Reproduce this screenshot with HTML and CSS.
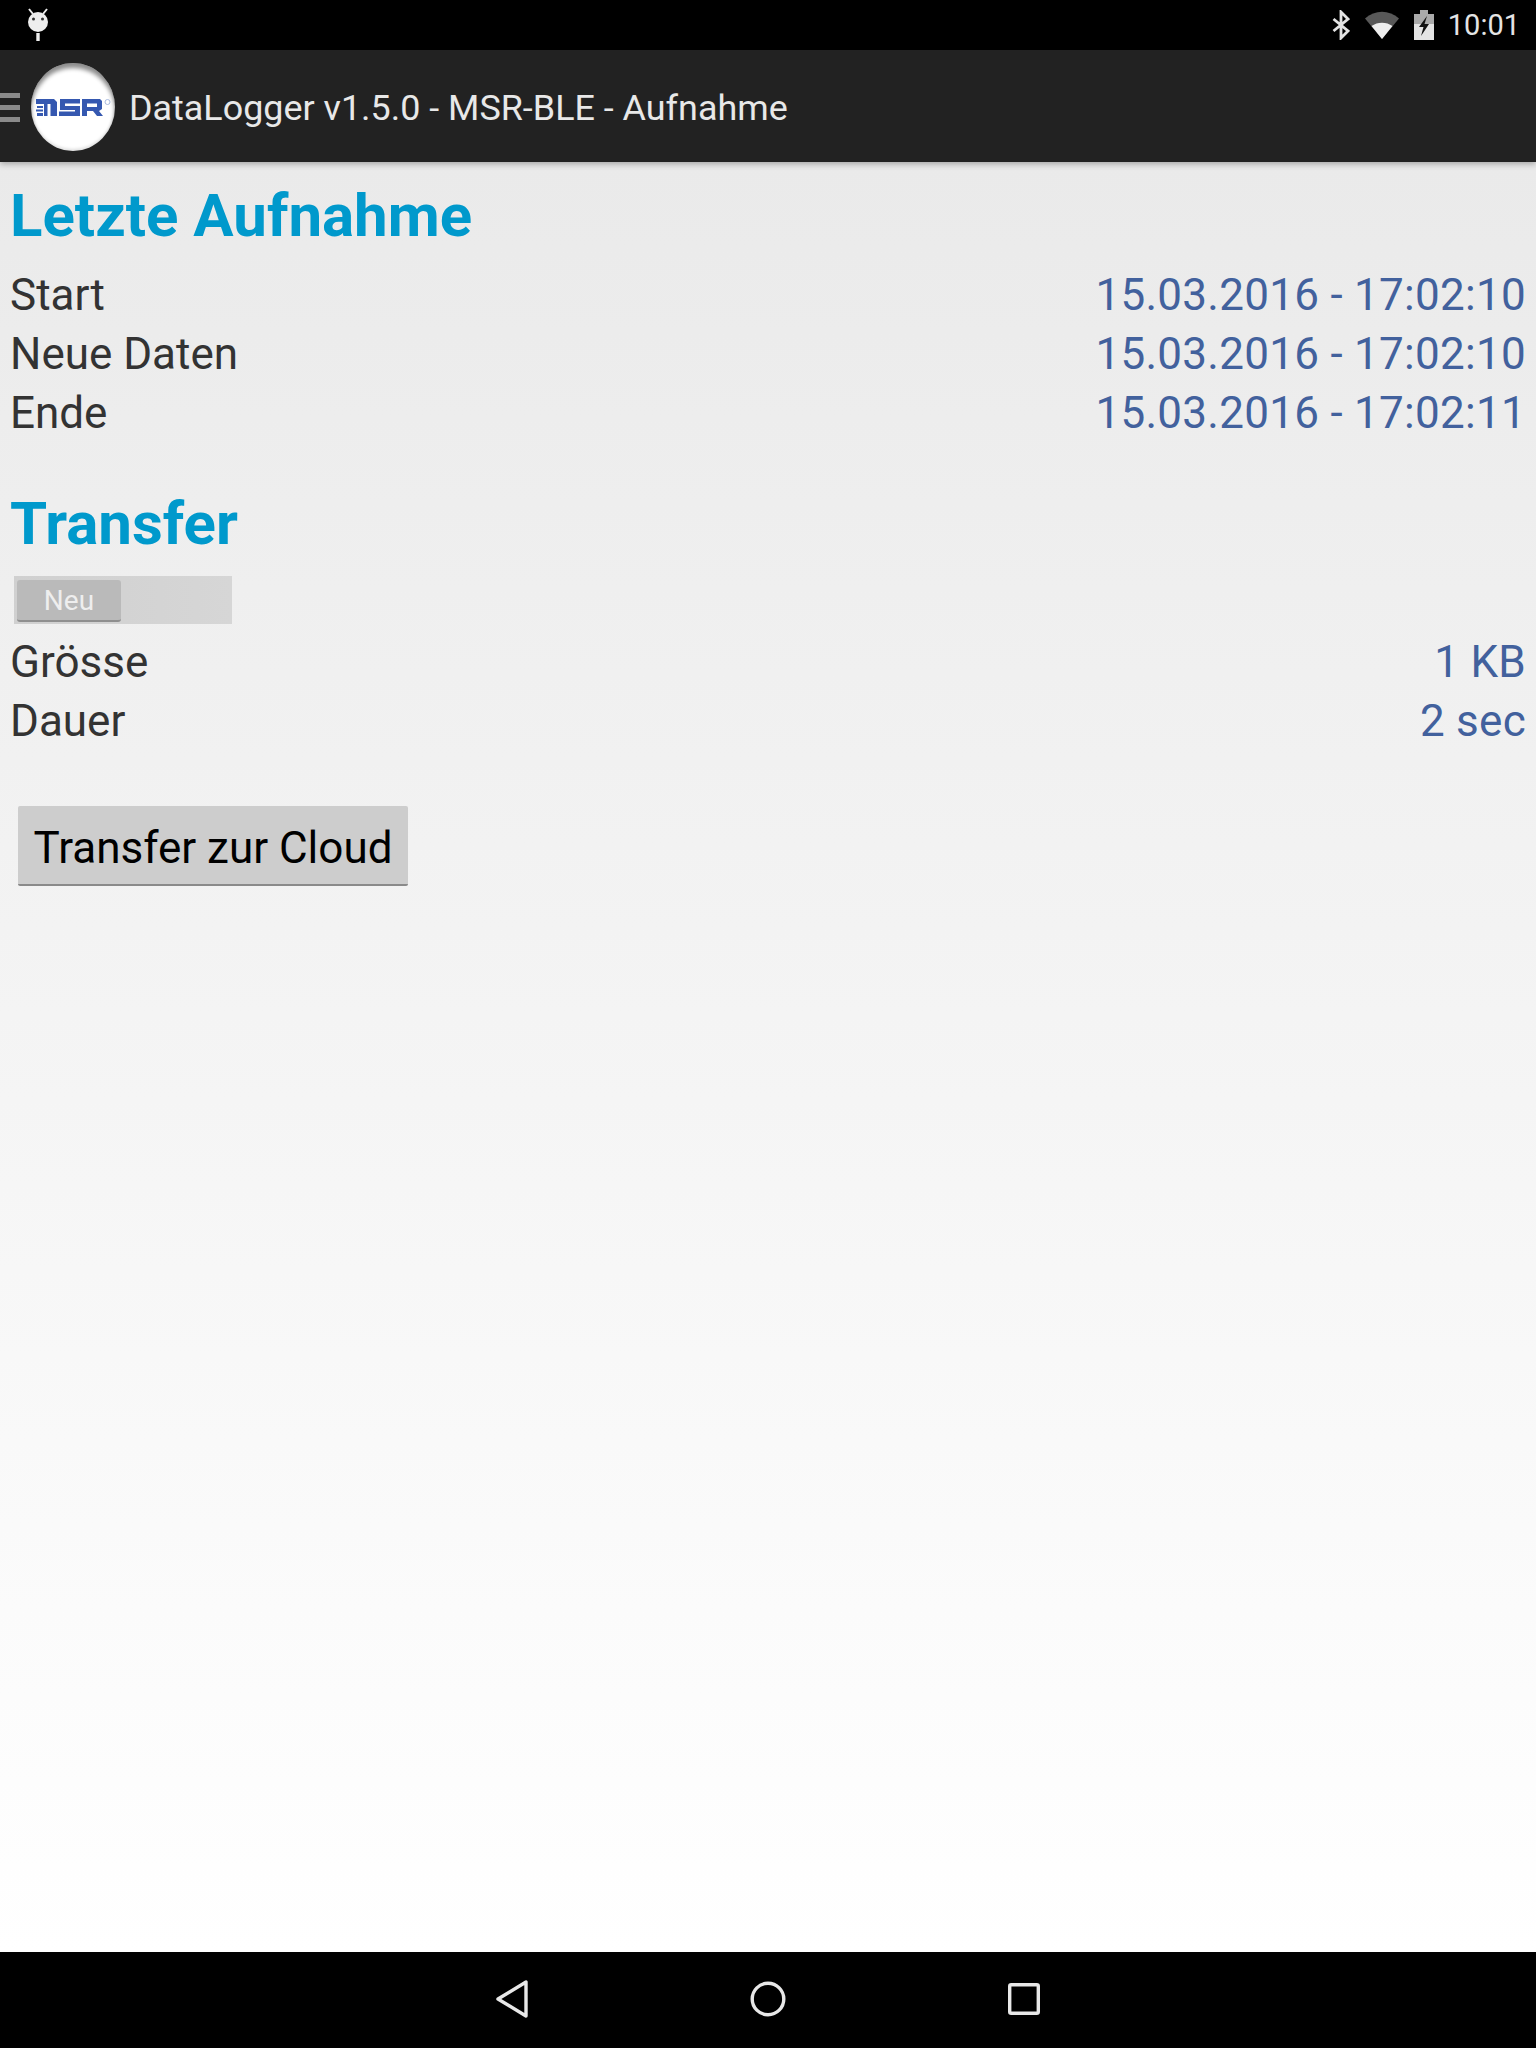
FILE: index.html
```html
<!DOCTYPE html>
<html lang="de">
<head>
<meta charset="utf-8">
<title>DataLogger</title>
<link rel="stylesheet" href="styles.css">
</head>
<body>
<div class="screen">
  <div class="statusbar">
    <svg class="android" width="28" height="36" viewBox="0 0 28 36">
      <path d="M5 3l4 5M23 3l-4 5" stroke="#eee" stroke-width="2" fill="none"/>
      <circle cx="14" cy="16" r="10" fill="#eee"/>
      <circle cx="9.500" cy="13" r="1.500" fill="#333"/>
      <circle cx="18.500" cy="13" r="1.500" fill="#333"/>
      <rect x="12.300" y="27" width="3.400" height="8" fill="#eee"/>
    </svg>
    <div class="status-right">
      <svg width="18" height="30" viewBox="0 0 18 30"><path d="M1.500 9L16 21l-7 7V2l7 7L1.500 21" stroke="#e4e4e4" stroke-width="2.800" fill="none"/></svg>
      <svg class="wifi" width="34" height="28" viewBox="0 0 34 28"><path d="M0 7.500C10-1.500 24-1.500 34 7.500L17 28z" fill="#585858"/><path d="M6.500 15C12.500 10.500 21.500 10.500 27.500 15L17 28z" fill="#eee"/></svg>
      <svg class="batt" width="20" height="30" viewBox="0 0 20 30"><path d="M0 4h6V0h8v4h6v26H0z" fill="#e4e4e4"/><path d="M0 4h6V0h8v4h6v10H0z" fill="#aaa"/><path d="M13 6L5 17h4.500L7 26l8-12h-4.500L13 6z" fill="#111"/></svg>
      <span class="clock">10:01</span>
    </div>
  </div>
  <header class="appbar">
    <div class="burger"><i></i><i></i><i></i></div>
    <div class="logo">
      <svg width="76" height="20" viewBox="0 0 76 20">
        <path fill="#3558b0" d="M0 0h18l3 3v14h-6.500V5H11.500v12H8V5H0zM1 7h6v2H1zM0 10.500h7v2H0zM1 14h6v3H1z"/>
        <path fill="#3558b0" d="M24 0h20v4.500H29v2.500h15v10H23v-4.500h16V11H24zM46 0h18l2 2v8l-3 2 4 5h-6l-4-5h-6v5h-5zM51 4.500v3.500h10V4.500z"/>
        <circle cx="71.500" cy="3" r="2.500" fill="none" stroke="#a9bade" stroke-width="1"/>
      </svg>
    </div>
    <div class="apptitle">DataLogger v1.5.0 - MSR-BLE - Aufnahme</div>
  </header>
  <main class="content">
    <h2 class="head first">Letzte Aufnahme</h2>
    <div class="row"><span>Start</span><span class="val">15.03.2016 - 17:02:10</span></div>
    <div class="row"><span>Neue Daten</span><span class="val">15.03.2016 - 17:02:10</span></div>
    <div class="row"><span>Ende</span><span class="val">15.03.2016 - 17:02:11</span></div>
    <h2 class="head second">Transfer</h2>
    <div class="tabs"><div class="tab">Neu</div></div>
    <div class="row"><span>Grösse</span><span class="val">1 KB</span></div>
    <div class="row"><span>Dauer</span><span class="val">2 sec</span></div>
    <button class="cloud" type="button">Transfer zur Cloud</button>
  </main>
  <nav class="navbar">
    <div class="navbtn"><svg width="34" height="40" viewBox="0 0 34 40"><path d="M31 3V37L3 20z" fill="none" stroke="#e8e8e8" stroke-width="3.400" stroke-linejoin="round"/></svg></div>
    <div class="navbtn"><svg width="36" height="36" viewBox="0 0 36 36"><circle cx="18" cy="18" r="15.800" fill="none" stroke="#e8e8e8" stroke-width="3.400"/></svg></div>
    <div class="navbtn"><svg width="32" height="32" viewBox="0 0 32 32"><rect x="1.700" y="1.700" width="28.600" height="28.600" rx="1.500" fill="none" stroke="#e8e8e8" stroke-width="3.400"/></svg></div>
  </nav>
</div>
</body>
</html>
```
FILE: styles.css
```css
* { box-sizing: border-box; }
html, body { margin: 0; padding: 0; }
body { font-family: Roboto, "Liberation Sans", sans-serif; }
.screen { width: 1536px; height: 2048px; display: flex; flex-direction: column; overflow: hidden; }
.statusbar { height: 50px; background: #000; display: flex; align-items: center; justify-content: space-between; padding: 0 16px 0 24px; flex: none; }
.android { margin-top: -2px; }
.status-right { display: flex; align-items: center; }
.status-right svg { display: block; }
.wifi { margin-left: 15px; }
.batt { margin-left: 15px; }
.clock { margin-left: 14px; color: #e4e4e4; font-size: 29px; }
.appbar { height: 112px; background: #222; display: flex; align-items: center; flex: none; position: relative; box-shadow: 0 2px 6px rgba(0,0,0,.3); }
.burger { width: 20px; display: flex; flex-direction: column; gap: 7px; flex: none; margin-top: 2px; }
.burger i { display: block; height: 5px; background: #8a8a8a; }
.logo { width: 84px; height: 88px; margin-left: 11px; border-radius: 50%; background: #fff; box-shadow: inset 0 5px 4px rgba(0,0,0,.45), inset 0 -2px 3px rgba(0,0,0,.12); display: flex; align-items: center; justify-content: center; flex: none; margin-top: 1px; }
.logo svg { display: block; margin: 4px 0 0 2px; }
.apptitle { margin-left: 14px; padding-top: 3px; font-size: 35.900px; color: #e8e8e8; white-space: nowrap; }
.content { flex: 1; padding: 0 10px; background: linear-gradient(#eaeaea, #ffffff); }
.head { margin: 0; font-size: 60px; line-height: 70px; font-weight: 700; color: #0099cc; }
.first { padding-top: 19px; margin-bottom: 15px; }
.second { padding-top: 46px; }
.row { display: flex; justify-content: space-between; font-size: 44px; line-height: 59px; color: #333; }
.val { color: #42619d; letter-spacing: .28px; }
.tabs { margin: 17px 0 9px 4px; width: 218px; height: 48px; background: linear-gradient(90deg, #d0d0d0, #d6d6d6); padding: 4px 0 2px 3px; }
.tab { width: 104px; height: 42px; background: #bababa; border-radius: 3px; border-bottom: 2px solid #8f8f8f; color: #eee; font-size: 28px; line-height: 42px; text-align: center; }
.cloud { display: block; margin: 55px 0 0 8px; width: 390px; height: 80px; border: none; border-bottom: 2px solid #8a8a8a; border-radius: 2px; background: #cdcdcd; color: #000; font-family: inherit; font-size: 44px; padding: 6px 0 0; }
.navbar { height: 96px; background: #000; flex: none; display: flex; align-items: center; justify-content: center; gap: 196px; padding-bottom: 2px; }
.navbtn { width: 60px; display: flex; justify-content: center; }
.navbtn svg { display: block; }
```
